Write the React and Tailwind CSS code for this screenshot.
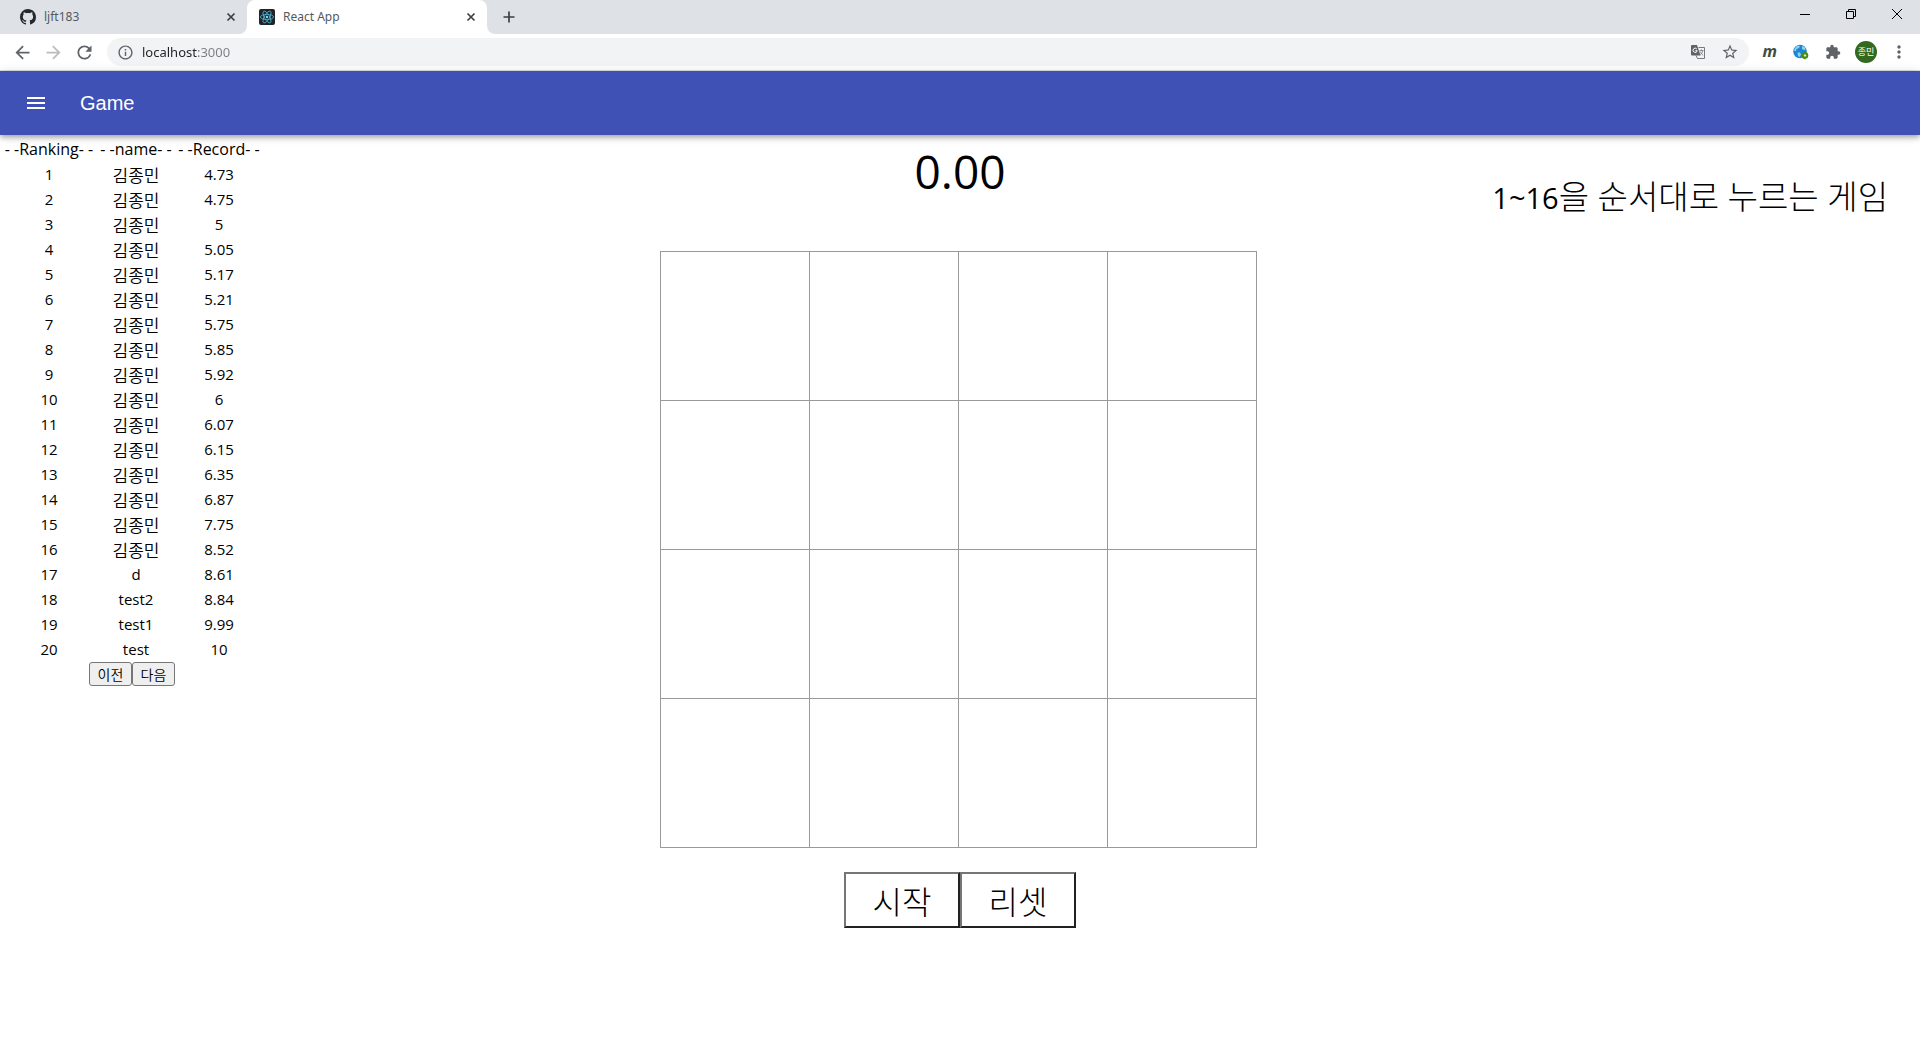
import React from "react";
import { VscGithubInverted } from "react-icons/vsc";
import { MdArrowBack, MdArrowForward, MdRefresh, MdInfoOutline, MdStarBorder, MdExtension, MdMoreVert, MdMenu } from "react-icons/md";

const NAME = "김종민";
const records = [
  [NAME, "4.73"], [NAME, "4.75"], [NAME, "5"], [NAME, "5.05"], [NAME, "5.17"],
  [NAME, "5.21"], [NAME, "5.75"], [NAME, "5.85"], [NAME, "5.92"], [NAME, "6"],
  [NAME, "6.07"], [NAME, "6.15"], [NAME, "6.35"], [NAME, "6.87"], [NAME, "7.75"],
  [NAME, "8.52"], ["d", "8.61"], ["test2", "8.84"], ["test1", "9.99"], ["test", "10"],
];

function ReactIcon() {
  return (
    <svg viewBox="0 0 16 16" className="size-4 shrink-0" aria-hidden="true">
      <rect width="16" height="16" rx="2" fill="#20232a" />
      <g fill="none" stroke="#4fb8d3" strokeWidth="0.8">
        <ellipse cx="8" cy="8" rx="6.6" ry="2.6" />
        <ellipse cx="8" cy="8" rx="6.6" ry="2.6" transform="rotate(60 8 8)" />
        <ellipse cx="8" cy="8" rx="6.6" ry="2.6" transform="rotate(120 8 8)" />
      </g>
      <circle cx="8" cy="8" r="1.3" fill="#61dafb" />
    </svg>
  );
}

function GlobeIcon() {
  return (
    <svg viewBox="0 0 16 16" className="size-4" aria-hidden="true">
      <circle cx="7" cy="7.5" r="6.8" fill="#1c86cf" />
      <path d="M1.500 5 3.500 2.300 6 1.500l1 1.500-2 1.500-1.500.5L3 7 1.200 7zM9 2l2.500 1 1.200 2.500-1.700.5-2-1zM4.500 8.500h2.500l1 2-1.500 2.500-1.500-1z" fill="#8dd0f0" />
      <circle cx="12" cy="11.500" r="2.300" fill="#d5e8c8" stroke="#4c8a10" strokeWidth="2" />
      <path d="M11.500 7.200l3 1.700-2.800 1.700zM12.500 15.700l-3-1.700 2.800-1.700z" fill="#4c8a10" />
    </svg>
  );
}

function TranslateIcon() {
  return (
    <svg viewBox="0 0 14 14" className="size-3.5" fill="none" aria-hidden="true">
      <path d="M7.500 2.500h6v11H6.500L5 10.500" stroke="#76797d" />
      <path d="M0 1a1 1 0 0 1 1-1h5l3.500 10.500H1a1 1 0 0 1-1-1z" fill="#5f6368" />
      <path d="M5.800 4A2.100 2.100 0 1 0 6.200 5.700H4.300" stroke="#fff" />
      <path d="M8.500 5.500h4M10.500 4.500v1M11.800 5.500c-.4 2-1.500 3.500-2.800 4.500M9.300 6.500c.6 1.700 1.700 3 3 4" stroke="#76797d" strokeWidth="0.8" />
    </svg>
  );
}

function Tab({ icon, title, active }) {
  return (
    <div className={active ? "relative flex h-full w-60 items-center rounded-t-lg bg-white pl-3 pr-2.5" : "flex h-full w-[247px] items-center pl-5 pr-2.5"}>
      {active && (
        <>
          <svg viewBox="0 0 8 8" className="absolute -left-2 bottom-0 size-2" aria-hidden="true"><path d="M8 0v8H0a8 8 0 0 0 8-8" fill="#fff" /></svg>
          <svg viewBox="0 0 8 8" className="absolute -right-2 bottom-0 size-2" aria-hidden="true"><path d="M0 0v8h8a8 8 0 0 1-8-8" fill="#fff" /></svg>
        </>
      )}
      {icon}
      <span className="ml-2 flex-1 text-xs text-[#55595d]">{title}</span>
      <button type="button" aria-label={"Close " + title}>
        <svg viewBox="0 0 12 12" className="size-3"><path d="M2.500 2.500l7 7M9.500 2.500l-7 7" stroke="#3c4043" strokeWidth="1.700" /></svg>
      </button>
    </div>
  );
}

function Browser() {
  return (
    <div className="font-['Noto_Sans',sans-serif]">
      <div className="flex h-[34px] items-stretch bg-[#dee1e6]">
        <Tab icon={<VscGithubInverted className="size-4 text-[#24292e]" />} title="ljft183" />
        <Tab active icon={<ReactIcon />} title="React App" />
        <button type="button" aria-label="New tab" className="ml-4">
          <svg viewBox="0 0 12 12" className="size-3"><path d="M6 .5v11M.5 6h11" stroke="#3c4043" strokeWidth="1.700" /></svg>
        </button>
        <div className="ml-auto flex h-7 items-center">
          <button type="button" aria-label="Minimize" className="flex w-[46px] justify-center">
            <svg viewBox="0 0 10 10" className="size-2.5"><path d="M0 5.500h10" stroke="#000" /></svg>
          </button>
          <button type="button" aria-label="Restore" className="flex w-[46px] justify-center">
            <svg viewBox="0 0 10 10" className="size-2.5" fill="none" stroke="#000"><path d="M.5 2.500h7v7h-7zM2.500 2.500v-2h7v7h-2" /></svg>
          </button>
          <button type="button" aria-label="Close window" className="flex w-[46px] justify-center">
            <svg viewBox="0 0 10 10" className="size-2.5"><path d="M0 0l10 10M10 0L0 10" stroke="#000" /></svg>
          </button>
        </div>
      </div>
      <div className="flex h-[37px] items-center border-b border-[#dcdee1] bg-white pr-[11px] pl-3 text-[#5f6368]">
        <button type="button" aria-label="Back"><MdArrowBack className="size-[21px]" /></button>
        <button type="button" aria-label="Forward" className="ml-2.5 text-[#babcbe]"><MdArrowForward className="size-[21px]" /></button>
        <button type="button" aria-label="Reload" className="ml-2.5"><MdRefresh className="size-[21px]" /></button>
        <div className="ml-3 flex h-7 flex-1 items-center rounded-full bg-[#f1f3f4] px-2.5">
          <MdInfoOutline className="size-[17px]" />
          <input aria-label="Address" defaultValue="localhost:3000" className="ml-2 h-6 flex-1 bg-[linear-gradient(to_right,#202124_56px,#7a7d80_56px)] bg-clip-text text-[13px] leading-6 text-transparent outline-none" />
          <button type="button" aria-label="Translate"><TranslateIcon /></button>
          <button type="button" aria-label="Bookmark" className="ml-4"><MdStarBorder className="size-[18px]" /></button>
        </div>
        <button type="button" aria-label="Mail" className="ml-3.5 pb-0.5 text-base leading-5 font-bold italic text-[#414b3f]">m</button>
        <button type="button" aria-label="Web" className="ml-4"><GlobeIcon /></button>
        <button type="button" aria-label="Extensions" className="ml-4"><MdExtension className="size-4" /></button>
        <button type="button" aria-label="Profile" className="ml-3.5 flex size-[22px] items-center justify-center rounded-full bg-[#33691e] font-['Noto_Sans_CJK_KR',sans-serif] text-[9px] text-white">종민</button>
        <button type="button" aria-label="Menu" className="ml-3"><MdMoreVert className="size-5" /></button>
      </div>
    </div>
  );
}

export default function App() {
  return (
    <div className="min-h-screen bg-white font-['Open_Sans','Noto_Sans_CJK_KR',sans-serif] text-black">
      <Browser />
      <header className="relative flex h-16 items-center bg-[#3f51b5] px-6 text-white shadow-[0_2px_4px_-1px_rgba(0,0,0,0.2),0_4px_5px_0_rgba(0,0,0,0.14),0_1px_10px_0_rgba(0,0,0,0.12)]">
        <button type="button" aria-label="Open menu"><MdMenu className="size-6" /></button>
        <h1 className="ml-8 font-['Liberation_Sans',sans-serif] text-xl">Game</h1>
      </header>
      <main className="grid grid-cols-3">
        <section className="pt-0.5">
          <table className="w-[264px] table-fixed border-collapse text-center text-[15px] leading-[25px] whitespace-nowrap">
            <colgroup><col className="w-[98px]" /><col className="w-[76px]" /><col className="w-[90px]" /></colgroup>
            <thead>
              <tr>
                {["Ranking", "name", "Record"].map((h) => <th key={h} className="p-0 text-base leading-[25px] font-normal">- -{h}- -</th>)}
              </tr>
            </thead>
            <tbody>
              {records.map(([name, time], i) => (
                <tr key={i} className="h-[25px]">
                  <td className="p-0">{i + 1}</td>
                  <td className={name === NAME ? "p-0 font-['Noto_Sans_CJK_KR',sans-serif] text-[17px] leading-[24px] font-[350]" : "p-0"}>{name}</td>
                  <td className="p-0">{time}</td>
                </tr>
              ))}
            </tbody>
          </table>
          <div className="flex w-[264px] justify-center">
            {["이전", "다음"].map((t) => (
              <button key={t} type="button" className="h-6 w-[43px] rounded-[3px] border border-[#767676] bg-[#efefef] font-['Noto_Sans_CJK_KR',sans-serif] text-sm leading-5 font-[350]">{t}</button>
            ))}
          </div>
        </section>
        <section className="flex flex-col items-center">
          <output className="pt-1.5 text-[46px] leading-[60px]">0.00</output>
          <div className="mt-[50px] w-[600px]">
            <div className="mr-[3px] grid grid-cols-4 border-t border-l border-[#999]">
              {Array.from({ length: 16 }, (_, i) => (
                <button key={i} type="button" aria-label={"Cell " + (i + 1)} className="h-[149px] border-r border-b border-[#999] bg-white" />
              ))}
            </div>
          </div>
          <div className="mt-6 flex">
            {["시작", "리셋"].map((t) => (
              <button key={t} type="button" className="h-14 w-[116px] border-2 border-t-[#767676] border-r-[#212121] border-b-[#212121] border-l-[#767676] bg-white font-['Noto_Sans_CJK_KR',sans-serif] text-[32px] leading-[48px] font-light">{t}</button>
            ))}
          </div>
        </section>
        <p className="pt-10 pr-8 text-right text-[29px] leading-[44px]">1~16<span className="text-[33px] font-light">을 순서대로 누르는 게임</span></p>
      </main>
    </div>
  );
}
